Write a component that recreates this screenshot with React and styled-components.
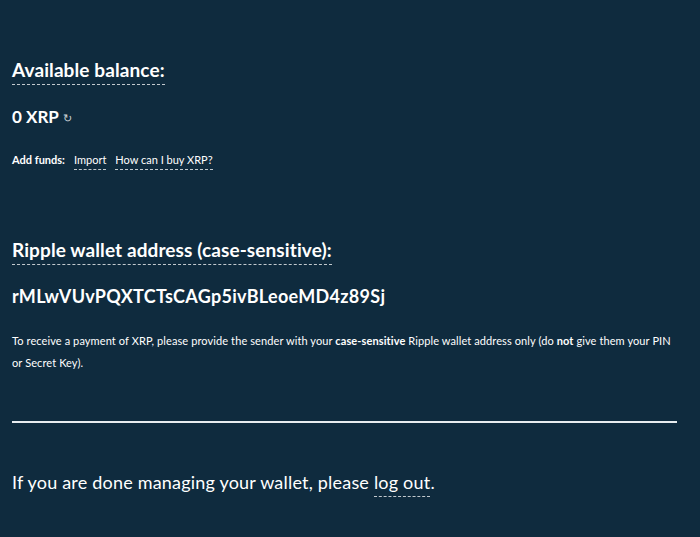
import styled, { createGlobalStyle } from 'styled-components';

const GlobalStyle = createGlobalStyle`
  html, body {
    margin: 0;
    padding: 0;
    background: #0f2b3e;
  }
  body {
    font-family: Lato, "Noto Sans", sans-serif;
    color: #ffffff;
  }
`

const App = () => {
  return (
    <>
      <GlobalStyle />
      <Page>
        <Section>
          <Heading>Available balance:</Heading>
          <Balance>
            0 XRP <Refresh>↻</Refresh>
          </Balance>
          <Funds>
            <FundsLabel>Add funds:</FundsLabel>
            <DottedLink>Import</DottedLink>
            <DottedLink>How can I buy XRP?</DottedLink>
          </Funds>
        </Section>

        <Section $top={68}>
          <Heading>Ripple wallet address (case-sensitive):</Heading>
          <Address>rMLwVUvPQXTCTsCAGp5ivBLeoeMD4z89Sj</Address>
          <Note>
            To receive a payment of XRP, please provide the sender with your <Strong>case-sensitive</Strong> Ripple
            wallet address only (do <Strong>not</Strong> give them your PIN or Secret Key).
          </Note>
        </Section>

        <Divider />

        <Logout>
          If you are done managing your wallet, please <DottedLink $big>log out</DottedLink>.
        </Logout>
      </Page>
    </>
  )
}

const Page = styled.div`
  min-height: 537px;
  padding: 58px 23px 0 12px;
  box-sizing: border-box;
`

const Section = styled.section`
  display: flex;
  flex-direction: column;
  align-items: flex-start;
  margin-top: ${props => props.$top || 0}px;
`

const Heading = styled.h2`
  margin: 0;
  font-size: 19px;
  font-weight: 700;
  letter-spacing: 0.1px;
  line-height: 24px;
  padding-bottom: 2px;
  border-bottom: 1px dashed rgba(255, 255, 255, 0.75);
`

const Balance = styled.div`
  margin-top: 18px;
  font-size: 17px;
  font-weight: 700;
  line-height: 24px;
  display: flex;
  align-items: center;
  gap: 4px;
`

const Refresh = styled.span`
  font-size: 11px;
  font-weight: 400;
  margin-top: 3px;
  color: rgba(255, 255, 255, 0.8);
`

const Funds = styled.div`
  margin-top: 22px;
  display: flex;
  align-items: baseline;
  gap: 9px;
  font-size: 11px;
  line-height: 16px;
`

const FundsLabel = styled.span`
  font-weight: 700;
`

const DottedLink = styled.a`
  color: #ffffff;
  cursor: pointer;
  font-weight: 400;
  border-bottom: 1px dashed rgba(255, 255, 255, 0.75);
  padding-bottom: ${props => props.$big ? 3 : 1}px;
`

const Address = styled.div`
  margin-top: 19px;
  font-size: 18px;
  font-weight: 700;
  letter-spacing: 0.3px;
  line-height: 24px;
`

const Note = styled.p`
  margin: 22px 0 0;
  font-size: 11px;
  line-height: 22px;
  font-weight: 400;
  letter-spacing: 0.1px;
`

const Strong = styled.strong`
  font-weight: 700;
  line-height: 1;
`

const Divider = styled.hr`
  margin: 47px 0 0;
  border: none;
  height: 2px;
  background: #e8ecef;
`

const Logout = styled.p`
  margin: 47px 0 0;
  font-size: 18px;
  font-weight: 400;
  letter-spacing: 0.2px;
  line-height: 24px;
`

export default App;
